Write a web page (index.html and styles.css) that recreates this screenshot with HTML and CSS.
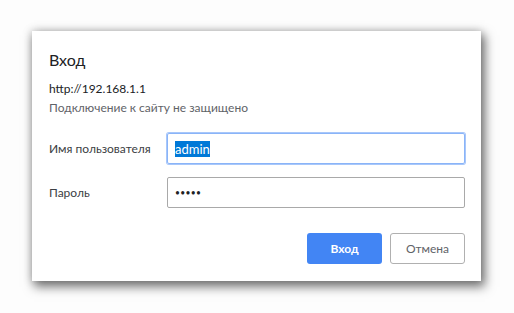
FILE: index.html
```html
<!DOCTYPE html>
<html lang="ru">
<head>
<meta charset="utf-8">
<title>Вход</title>
<link rel="stylesheet" href="styles.css">
</head>
<body>
<div class="dialog">
  <div class="title">Вход</div>
  <div class="origin">http://192.168.1.1</div>
  <div class="warning">Подключение к сайту не защищено</div>
  <div class="form">
    <div class="row">
      <label class="label">Имя пользователя</label>
      <div class="input focused"><span class="selected">admin</span></div>
    </div>
    <div class="row">
      <label class="label">Пароль</label>
      <div class="input"><span class="dots">•••••</span></div>
    </div>
  </div>
  <div class="buttons">
    <button class="btn primary">Вход</button>
    <button class="btn secondary">Отмена</button>
  </div>
</div>
</body>
</html>
```
FILE: styles.css
```css
html, body {
  margin: 0;
  padding: 0;
  background: #fdfdfd;
}
html {
  min-height: 100%;
}
body {
  min-height: 313px;
  box-sizing: border-box;
  padding: 31px 0 0 32px;
  font-family: "Lato", "Noto Sans", sans-serif;
  color: #202124;
}
.dialog {
  width: 449px;
  height: 250px;
  box-sizing: border-box;
  background: #fff;
  padding: 18px 16px 0 17px;
  box-shadow: 3px 5px 10px 1px rgba(0, 0, 0, 0.5), 0 0 9px rgba(0, 0, 0, 0.22);
  display: flex;
  flex-direction: column;
}
.title {
  font-size: 16px;
  line-height: 22px;
  color: #202124;
}
.origin {
  margin-top: 10px;
  font-size: 12px;
  line-height: 16px;
  color: #202124;
}
.warning {
  margin-top: 3px;
  font-size: 12px;
  line-height: 16px;
  color: #5f6368;
}
.form {
  margin-top: 17px;
  display: flex;
  flex-direction: column;
  gap: 13px;
}
.row {
  display: flex;
  align-items: center;
}
.label {
  width: 118px;
  font-size: 12px;
  color: #3c4043;
}
.input {
  width: 298px;
  height: 31px;
  box-sizing: border-box;
  border: 1px solid #a9a9a9;
  border-radius: 2px;
  display: flex;
  align-items: center;
  padding-left: 7px;
  font-size: 13px;
}
.input.focused {
  border-color: #8ab4f8;
  box-shadow: 0 0 0 1px #a8c7fa;
}
.selected {
  background: #0078d7;
  color: #fff;
  line-height: 16px;
}
.dots {
  font-size: 8.5px;
  letter-spacing: 0.3px;
  color: #202124;
}
.buttons {
  margin-top: 25px;
  display: flex;
  justify-content: flex-end;
  gap: 8px;
}
.btn {
  width: 75px;
  height: 31px;
  border-radius: 3px;
  font-family: "Lato", "Noto Sans", sans-serif;
  font-size: 12px;
  padding: 0;
}
.primary {
  background: #4285f4;
  border: none;
  color: #fff;
  font-weight: bold;
}
.secondary {
  background: #fff;
  border: 1px solid #b0b0b0;
  color: #5f6368;
}
```
